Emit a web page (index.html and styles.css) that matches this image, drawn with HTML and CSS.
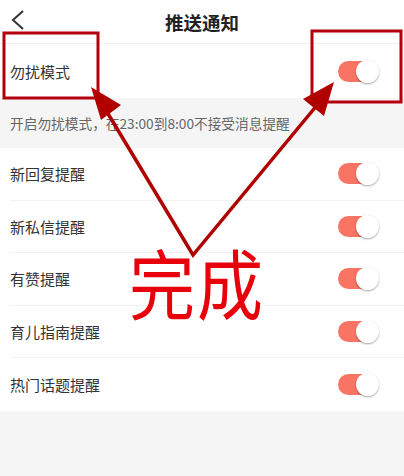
FILE: index.html
```html
<!DOCTYPE html>
<html lang="zh-CN">
<head>
<meta charset="UTF-8">
<meta name="viewport" content="width=device-width, initial-scale=1.0">
<title>推送通知</title>
<link rel="stylesheet" href="styles.css">
</head>
<body>

<div class="page">
    <div class="topbar">
        <svg class="back" width="16" height="24" viewBox="0 0 16 24">
            <path d="M13 3 L3 12 L13 21" fill="none" stroke="#333" stroke-width="2"/>
        </svg>
        <h1>推送通知</h1>
    </div>

    <div class="group">
        <div class="row first">
            <span>勿扰模式</span>
            <span class="toggle on"></span>
        </div>
    </div>

    <p class="tip">开启勿扰模式，在23:00到8:00不接受消息提醒</p>

    <div class="group">
        <div class="row"><span>新回复提醒</span><span class="toggle on"></span></div>
        <div class="row"><span>新私信提醒</span><span class="toggle on"></span></div>
        <div class="row"><span>有赞提醒</span><span class="toggle on"></span></div>
        <div class="row"><span>育儿指南提醒</span><span class="toggle on"></span></div>
        <div class="row"><span>热门话题提醒</span><span class="toggle on"></span></div>
    </div>

    <!-- 标注：红框 + 箭头 + 完成 -->
    <svg class="marks" width="404" height="476" viewBox="0 0 404 476">
        <rect x="4" y="33" width="94" height="65" fill="none" stroke="#b3000c" stroke-width="3"/>
        <rect x="312" y="31" width="89" height="71" fill="none" stroke="#b3000c" stroke-width="3"/>
        <polyline points="107,112 193,255 318,104" fill="none" stroke="#b00000" stroke-width="3.5"/>
        <polygon points="91,87 121,105 101,120" fill="#b00000"/>
        <polygon points="334,82 324,116 303,99" fill="#b00000"/>
    </svg>
    <div class="done">完成</div>
</div>

</body>
</html>
```

FILE: styles.css
```css
body {
    margin: 0;
    padding: 0;
    font-family: "Noto Sans CJK SC", "Noto Sans", sans-serif;
    background-color: #f5f5f5;
    color: #333;
}

.page {
    position: relative;
    width: 404px;
    height: 476px;
    overflow: hidden;
}

.topbar {
    height: 43px;
    background-color: #fff;
    border-bottom: 1px solid #f0f0f0;
    display: flex;
    align-items: center;
    justify-content: center;
    position: relative;
}

.topbar h1 {
    margin: 0;
    font-size: 18.5px;
    font-weight: bold;
    color: #222;
}

.back {
    position: absolute;
    left: 10px;
    top: 8px;
}

.group {
    background-color: #fff;
}

.row {
    height: 52.6px;
    margin-left: 10px;
    padding-right: 26px;
    display: flex;
    align-items: center;
    justify-content: space-between;
    border-bottom: 1px solid #f3f3f3;
    font-size: 15px;
    color: #333;
    box-sizing: border-box;
}

.row.first {
    height: 54px;
    border-bottom: none;
}

.row:last-child {
    border-bottom: none;
}

.tip {
    margin: 0;
    height: 50px;
    line-height: 50px;
    padding-left: 10px;
    font-size: 13.7px;
    color: #666;
}

.toggle {
    width: 40px;
    height: 21px;
    border-radius: 11px;
    background-color: #fa7464;
    position: relative;
}

.toggle::after {
    content: "";
    position: absolute;
    right: -1px;
    top: -1px;
    width: 23px;
    height: 23px;
    border-radius: 50%;
    background-color: #fff;
    box-shadow: 0 1px 2px rgba(0, 0, 0, 0.35);
}

.marks {
    position: absolute;
    left: 0;
    top: 0;
}

.done {
    position: absolute;
    left: 129px;
    top: 228px;
    font-size: 66px;
    line-height: 90px;
    color: #e8000b;
    letter-spacing: 2px;
    transform: scaleY(1.16);
    transform-origin: left top;
}
```
